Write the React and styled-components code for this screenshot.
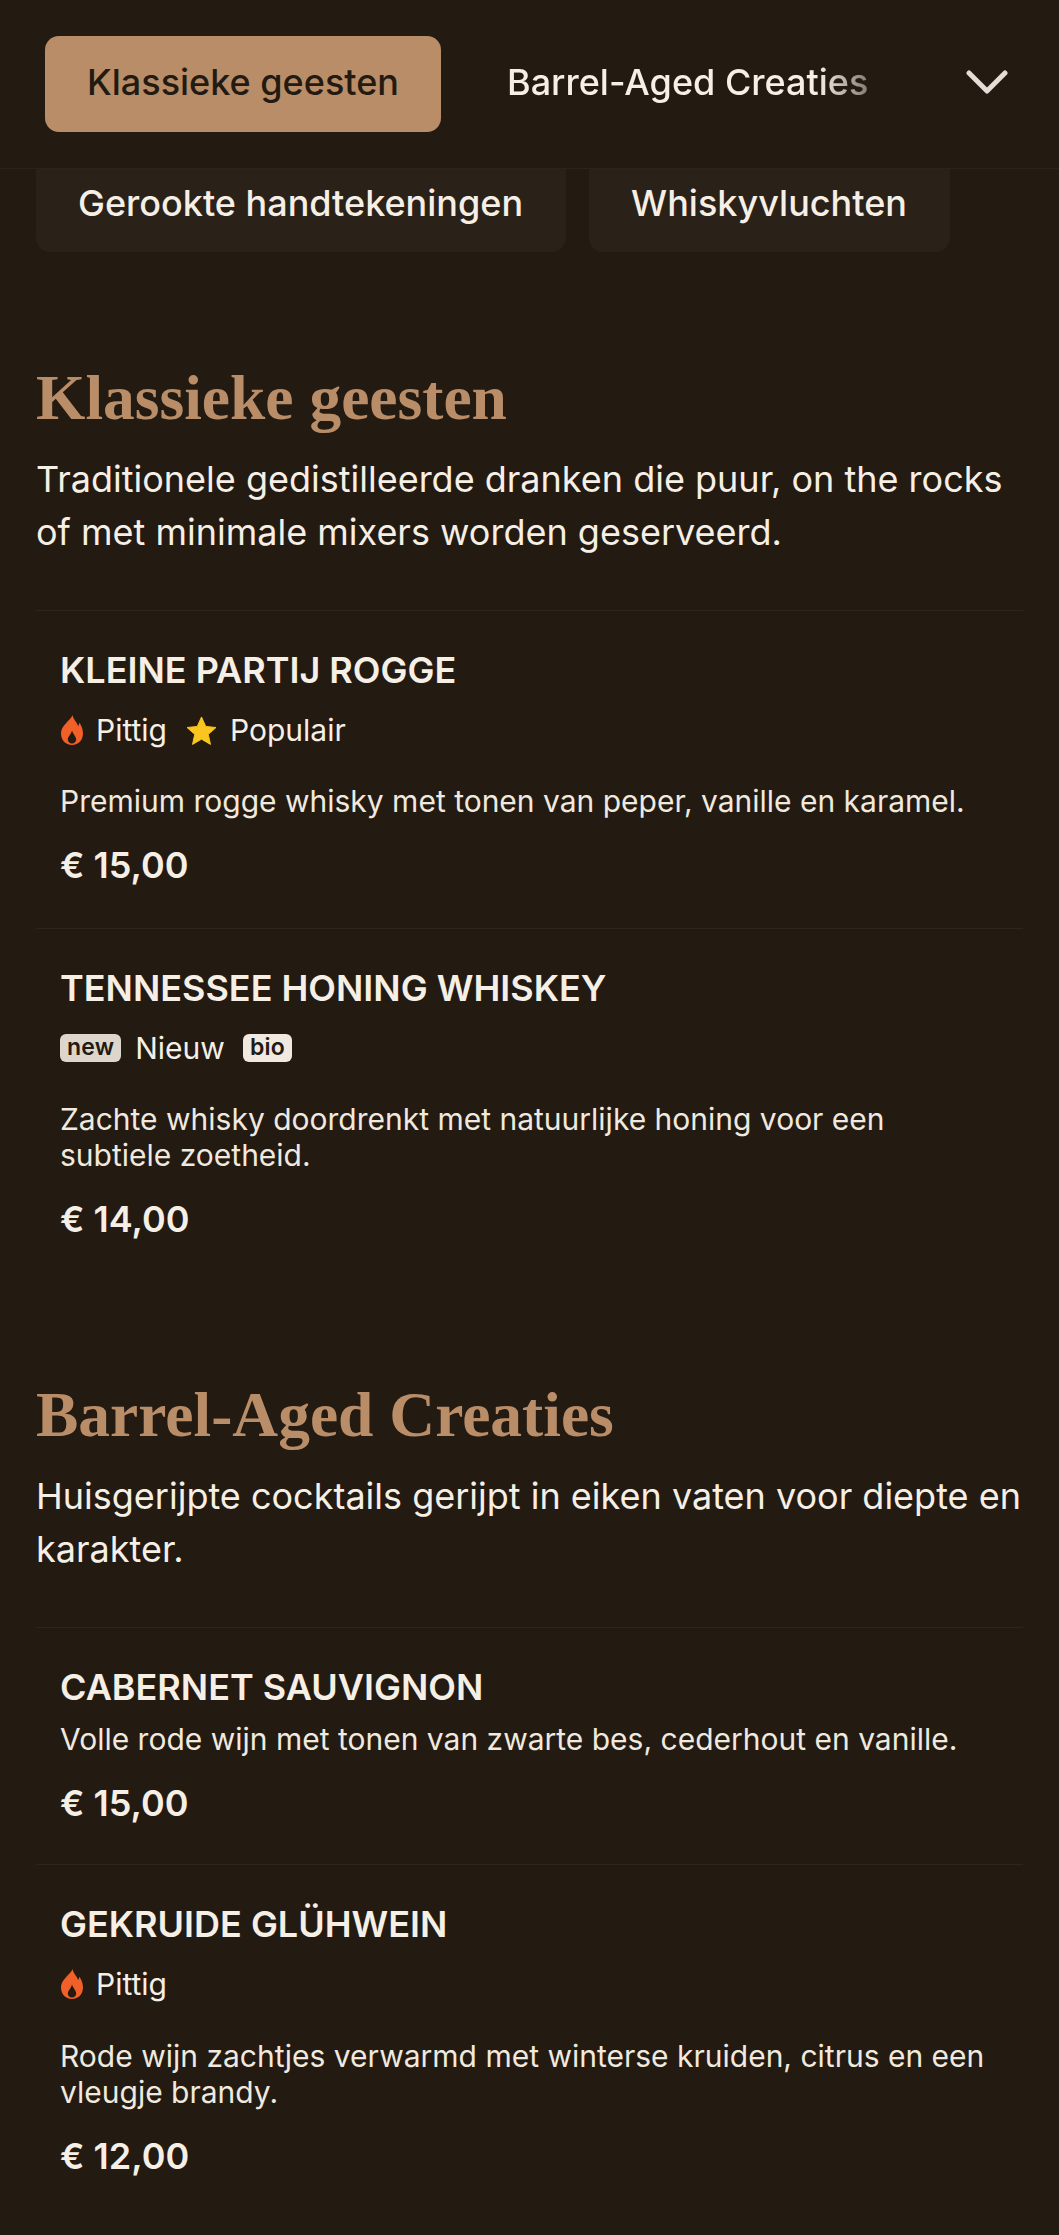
import React from 'react';
import styled, { createGlobalStyle } from 'styled-components';

const GlobalStyle = createGlobalStyle`
  html, body {
    margin: 0;
    padding: 0;
    background: #231a12;
  }
  * {
    box-sizing: border-box;
  }
`;

const Page = styled.div`
  width: 1059px;
  height: 2235px;
  overflow: hidden;
  background: #231a12;
  color: #f5efe6;
  font-family: Inter, "Liberation Sans", sans-serif;
`;

const Header = styled.header`
  height: 169px;
  padding: 36px 51px 0 45px;
  display: flex;
  align-items: flex-start;
  border-bottom: 1px solid #2c231a;
`;

const ActiveTab = styled.div`
  width: 396px;
  height: 96px;
  flex-shrink: 0;
  border-radius: 14px;
  background: #b98d68;
  color: #231a12;
  font-size: 36px;
  font-weight: 500;
  display: flex;
  align-items: center;
  justify-content: center;
  padding-bottom: 4px;
`;

const NextTab = styled.div`
  width: 362px;
  margin-left: 66px;
  height: 96px;
  font-size: 36px;
  font-weight: 500;
  white-space: nowrap;
  display: flex;
  align-items: center;
  padding-bottom: 4px;
  mask-image: linear-gradient(to right, #000 86%, rgba(0, 0, 0, 0.45) 100%);
`;

const ChevronSlot = styled.div`
  margin-left: auto;
  height: 96px;
  display: flex;
  align-items: center;
  padding-bottom: 4px;
  color: #e3ddd5;
`;

const SubTabs = styled.nav`
  height: 83px;
  overflow: hidden;
  padding: 0 36px;
  display: flex;
  gap: 23px;
`;

const SubTab = styled.div`
  height: 95px;
  margin-top: -12px;
  padding: 0 43px 4px 42px;
  border-radius: 14px;
  background: #2a2118;
  font-size: 36px;
  font-weight: 500;
  white-space: nowrap;
  display: flex;
  align-items: center;
`;

const Section = styled.section`
  padding: 0 36px;
  margin-top: ${({ $top }) => $top}px;
`;

const SectionTitle = styled.h2`
  margin: 0;
  font-family: "Liberation Serif", serif;
  font-size: 63.5px;
  line-height: 80px;
  font-weight: 700;
  color: #b98d68;
`;

const SectionText = styled.p`
  margin: 15px 0 0;
  font-size: 36px;
  line-height: 53px;
  font-weight: 400;
  color: #f5efe6;
`;

const List = styled.div`
  margin-top: 51px;
`;

const Item = styled.article`
  border-top: 1px solid #2e251c;
  padding: 36px 24px 0;
  height: ${({ $height }) => $height}px;
`;

const ItemName = styled.h3`
  margin: 0;
  font-size: 36px;
  line-height: 46px;
  font-weight: 600;
  text-transform: uppercase;
`;

const Tags = styled.div`
  margin-top: 15px;
  height: 44px;
  display: flex;
  align-items: center;
  font-size: 30px;
`;

const Tag = styled.span`
  display: inline-flex;
  align-items: center;
  margin-right: 18px;
`;

const TagIcon = styled.span`
  display: inline-flex;
  margin-left: 1px;
  margin-right: 13px;
  color: ${({ $color }) => $color};
`;

const Badge = styled.span`
  display: inline-flex;
  align-items: center;
  justify-content: center;
  height: 28px;
  padding: 0 7px 2px;
  margin-right: 14px;
  border-radius: 6px;
  background: ${({ $bg }) => $bg};
  color: #231a12;
  font-size: 23px;
  font-weight: 600;
  letter-spacing: 0.2px;
`;

const ItemText = styled.p`
  margin: ${({ $top }) => $top}px 0 0;
  font-size: 30px;
  line-height: 36px;
  color: #f0e9df;
`;

const Price = styled.div`
  margin-top: 22px;
  font-size: 36px;
  line-height: 48px;
  font-weight: 600;
`;

const Chevron = () => (
  <svg width="42" height="28" viewBox="0 0 42 28" fill="none">
    <path d="M3 5 L21 23 L39 5" stroke="currentColor" strokeWidth="5" strokeLinecap="round" strokeLinejoin="round" />
  </svg>
);

const Flame = () => (
  <svg width="22" height="30" viewBox="0 0 22 30">
    <path
      fill="currentColor"
      fillRule="evenodd"
      d="M11.5 0 C12.5 5 16 7 17 11 C18 9.8 18.3 8.8 18.3 7.5 C20.5 10.5 22 14.5 22 18.5 C22 25 17.5 30 11 30 C4.5 30 0 25 0 18.5 C0 13 4 9.5 7 6 C9 3.8 11 2 11.5 0 Z M11 28.5 C8.5 28.5 6.8 27 6.8 24.6 C6.8 21.5 10 19.8 11 15.5 C12.3 19.5 15.2 21.5 15.2 24.6 C15.2 27 13.5 28.5 11 28.5 Z"
    />
  </svg>
);

const Star = () => (
  <svg width="31" height="29" viewBox="0 0 32 30">
    <path
      fill="currentColor"
      stroke="currentColor"
      strokeWidth="1"
      strokeLinejoin="round"
      d="M16 1 L20.4 10.8 L31 11.9 L23 19 L25.3 29.4 L16 24 L6.7 29.4 L9 19 L1 11.9 L11.6 10.8 Z"
    />
  </svg>
);

const Spicy = () => (
  <Tag>
    <TagIcon $color="#f2602a"><Flame /></TagIcon>
    Pittig
  </Tag>
);

const Popular = () => (
  <Tag>
    <TagIcon $color="#f9c51e"><Star /></TagIcon>
    Populair
  </Tag>
);

export default function App() {
  return (
    <Page>
      <GlobalStyle />
      <Header>
        <ActiveTab>Klassieke geesten</ActiveTab>
        <NextTab>Barrel-Aged Creaties</NextTab>
        <ChevronSlot><Chevron /></ChevronSlot>
      </Header>
      <SubTabs>
        <SubTab>Gerookte handtekeningen</SubTab>
        <SubTab>Whiskyvluchten</SubTab>
      </SubTabs>

      <Section $top={106}>
        <SectionTitle>Klassieke geesten</SectionTitle>
        <SectionText>Traditionele gedistilleerde dranken die puur, on the rocks of met minimale mixers worden geserveerd.</SectionText>
        <List>
          <Item $height={318}>
            <ItemName>Kleine partij rogge</ItemName>
            <Tags><Spicy /><Popular /></Tags>
            <ItemText $top={31}>Premium rogge whisky met tonen van peper, vanille en karamel.</ItemText>
            <Price>€ 15,00</Price>
          </Item>
          <Item $height={354}>
            <ItemName>Tennessee honing whiskey</ItemName>
            <Tags>
              <Badge $bg="#ddd6cd">new</Badge>
              <Tag>Nieuw</Tag>
              <Badge $bg="#f0e9df">bio</Badge>
            </Tags>
            <ItemText $top={31}>Zachte whisky doordrenkt met natuurlijke honing voor een subtiele zoetheid.</ItemText>
            <Price>€ 14,00</Price>
          </Item>
        </List>
      </Section>

      <Section $top={93}>
        <SectionTitle>Barrel-Aged Creaties</SectionTitle>
        <SectionText>Huisgerijpte cocktails gerijpt in eiken vaten voor diepte en karakter.</SectionText>
        <List>
          <Item $height={237}>
            <ItemName>Cabernet Sauvignon</ItemName>
            <ItemText $top={11}>Volle rode wijn met tonen van zwarte bes, cederhout en vanille.</ItemText>
            <Price>€ 15,00</Price>
          </Item>
          <Item $height={354}>
            <ItemName>Gekruide glühwein</ItemName>
            <Tags><Spicy /></Tags>
            <ItemText $top={32}>Rode wijn zachtjes verwarmd met winterse kruiden, citrus en een vleugje brandy.</ItemText>
            <Price>€ 12,00</Price>
          </Item>
        </List>
      </Section>
    </Page>
  );
}
